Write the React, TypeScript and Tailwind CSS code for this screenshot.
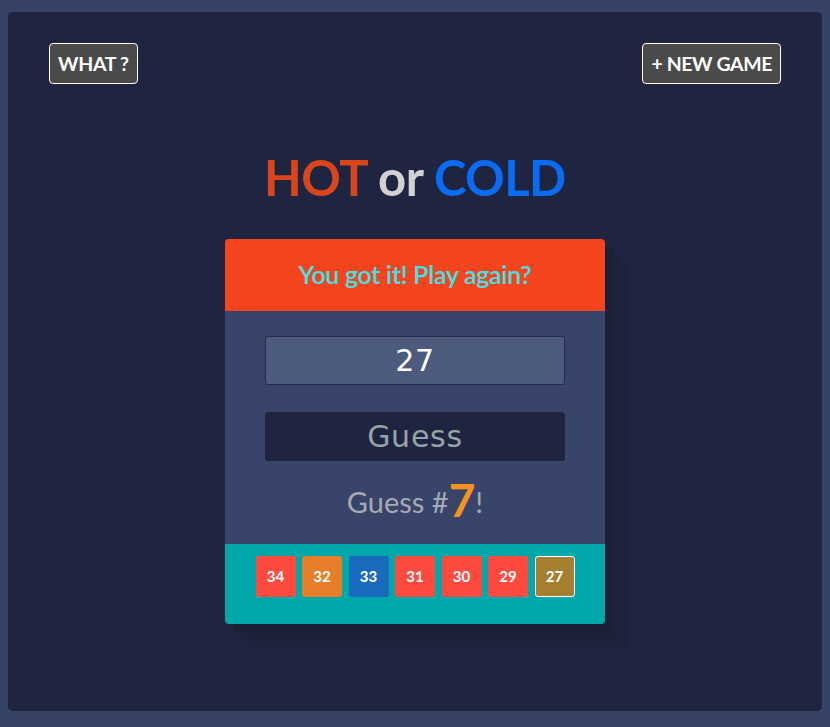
import React from "react";

const guesses = [
  { n: 34, cls: "bg-[#ff4a3f]" },
  { n: 32, cls: "bg-[#e67e2a]" },
  { n: 33, cls: "bg-[#1a6bbf]" },
  { n: 31, cls: "bg-[#ff4a3f]" },
  { n: 30, cls: "bg-[#ff4a3f]" },
  { n: 29, cls: "bg-[#ff4a3f]" },
  { n: 27, cls: "bg-[#a37f2f] border border-white" },
];

const App = () => {
  return (
    <div className="w-[830px] h-[727px] bg-[#364266] pt-[12px] px-[8px] pb-[16px] font-['Lato','Open_Sans',sans-serif]">
      <div className="h-full rounded-[5px] bg-[#1f2540] px-[41px] pt-[31px] flex flex-col">
        <div className="flex justify-between">
          <button className="h-[41px] px-[8px] rounded-[4px] border border-white bg-[#4a4a4a] text-white font-bold text-[19.5px] tracking-[-0.3px]">
            WHAT ?
          </button>
          <button className="h-[41px] px-[8px] rounded-[4px] border border-white bg-[#4a4a4a] text-white font-bold text-[19.5px] tracking-[-0.4px]">
            + NEW GAME
          </button>
        </div>

        <h1 className="mt-[61px] text-center font-bold text-[49px] leading-[64px] tracking-[-0.5px]">
          <span className="text-[#d9461c]">HOT</span>{" "}
          <span className="text-[#d2d2d2]">or</span>{" "}
          <span className="text-[#0a6cf3]">COLD</span>
        </h1>

        <div className="mt-[30px] self-center w-[380px] rounded-[4px] overflow-hidden shadow-[8px_8px_0_#1b2037,16px_16px_0_#1c2239,24px_24px_0_#1d233b]">
          <div className="h-[72px] bg-[#f6441f] flex items-center justify-center">
            <span className="text-[#3de3e8] text-[25px] font-semibold tracking-[-0.3px]">You got it! Play again?</span>
          </div>
          <div className="h-[233px] bg-[#38446a] flex flex-col items-center pt-[25px]">
            <div className="w-[300px] h-[49px] rounded-[3px] border border-[#242b46] bg-[#4c5a7e] flex items-center justify-center text-white text-[30px] font-['DejaVu_Sans',sans-serif] tracking-wide">
              27
            </div>
            <button className="mt-[27px] w-[300px] h-[49px] rounded-[3px] bg-[#1f2540] text-[#95a5a6] text-[30px] font-['DejaVu_Sans',sans-serif] tracking-wide">
              Guess
            </button>
            <div className="mt-[17px] flex items-end text-[#a6a9b1] text-[29px] leading-[40px]">
              <span>Guess #</span>
              <span className="text-[#f7921e] font-bold text-[46px] leading-[44px]">7</span>
              <span>!</span>
            </div>
          </div>
          <div className="h-[80px] bg-[#00a8aa] flex justify-center gap-[6.5px] pt-[12px]">
            {guesses.map((g, i) => (
              <div
                key={i}
                className={`w-[40px] h-[41px] rounded-[3px] flex items-center justify-center text-white font-bold text-[15px] ${g.cls}`}
              >
                {g.n}
              </div>
            ))}
          </div>
        </div>
      </div>
    </div>
  );
};

export default App;
